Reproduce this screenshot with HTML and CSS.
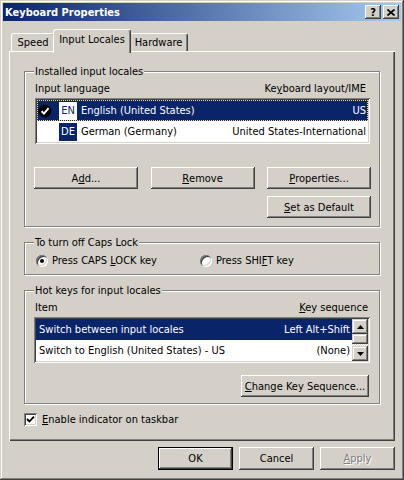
FILE: index.html
```html
<!DOCTYPE html>
<html>
<head>
<meta charset="utf-8">
<title>Keyboard Properties</title>
<link rel="stylesheet" href="styles.css">
</head>
<body>
<div class="window">
  <div class="titlebar">
    <span class="title">Keyboard Properties</span>
    <div class="tbtns">
      <span class="tbtn help">?</span>
      <span class="tbtn close"><svg width="8" height="7" viewBox="0 0 8 7"><path d="M0.5 0.5 L7.5 6.5 M7.5 0.5 L0.5 6.5" stroke="#000" stroke-width="1.7" fill="none"/></svg></span>
    </div>
  </div>
  <div class="content">
    <div class="tabs">
      <div class="tab t-speed">Speed</div>
      <div class="tab t-input sel">Input Locales</div>
      <div class="tab t-hw">Hardware</div>
    </div>
    <div class="panel">
      <fieldset class="group g1">
        <legend>Installed input locales</legend>
        <div class="colhead ch1"><span>Input language</span><span>Ke<u>y</u>board layout/IME</span></div>
        <div class="list l1">
          <div class="row sel focus">
            <span class="chk"><svg width="14" height="14" viewBox="0 0 14 14"><circle cx="7" cy="7" r="6.5" fill="#000"/><path d="M3.6 7.2 L6 9.6 L10.6 4.2" stroke="#fff" stroke-width="2" fill="none"/></svg></span>
            <span class="badge light">EN</span>
            <span class="name">English (United States)</span>
            <span class="val">US</span>
          </div>
          <div class="row">
            <span class="chk"></span>
            <span class="badge dark">DE</span>
            <span class="name">German (Germany)</span>
            <span class="val">United States-International</span>
          </div>
        </div>
        <div class="btnrow">
          <div class="btn w104">A<u>d</u>d...</div>
          <div class="btn w104"><u>R</u>emove</div>
          <div class="btn w104"><u>P</u>roperties...</div>
        </div>
        <div class="btnrow2">
          <div class="btn w104"><u>S</u>et as Default</div>
        </div>
      </fieldset>

      <fieldset class="group g2">
        <legend>To turn off Caps Lock</legend>
        <div class="radios">
          <div class="opt opt1"><span class="radio"><span class="dot"></span></span><span>Press CAPS <u>L</u>OCK key</span></div>
          <div class="opt"><span class="radio"></span><span>Press SHI<u>F</u>T key</span></div>
        </div>
      </fieldset>

      <fieldset class="group g3">
        <legend>Hot keys for input locales</legend>
        <div class="colhead ch3"><span>Item</span><span><u>K</u>ey sequence</span></div>
        <div class="list l3">
          <div class="rows">
            <div class="row2 sel"><span>Switch between input locales</span><span>Left Alt+Shift</span></div>
            <div class="row2"><span>Switch to English (United States) - US</span><span>(None)</span></div>
          </div>
          <div class="sbar">
            <div class="sbtn up"><svg width="7" height="4" viewBox="0 0 7 4"><polygon points="0,4 7,4 3.5,0" fill="#000"/></svg></div>
            <div class="thumb"></div>
            <div class="track"></div>
            <div class="sbtn down"><svg width="7" height="4" viewBox="0 0 7 4"><polygon points="0,0 7,0 3.5,4" fill="#000"/></svg></div>
          </div>
        </div>
        <div class="btnrow3">
          <div class="btn w128"><u>C</u>hange Key Sequence...</div>
        </div>
      </fieldset>

      <div class="checkrow">
        <span class="checkbox"><svg width="9" height="9" viewBox="0 0 9 9"><path d="M1 4 L3.4 6.4 L8 1.6" stroke="#000" stroke-width="1.8" fill="none"/></svg></span>
        <span><u>E</u>nable indicator on taskbar</span>
      </div>
    </div>
    <div class="footer">
      <div class="btn foot default">OK</div>
      <div class="btn foot">Cancel</div>
      <div class="btn foot disabled"><span><u>A</u>pply</span></div>
    </div>
  </div>
</div>
</body>
</html>
```

FILE: styles.css
```css
* { box-sizing: border-box; }
html, body { margin: 0; padding: 0; }
body {
  width: 404px;
  height: 480px;
  overflow: hidden;
  background: #D4D0C8;
  font-family: "DejaVu Sans Condensed", "DejaVu Sans", sans-serif;
  font-stretch: condensed;
  font-size: 11px;
  color: #000;
}
u { text-decoration: underline; text-underline-offset: 1px; }

.window {
  width: 404px;
  height: 480px;
  padding: 3px;
  background: #D4D0C8;
  box-shadow: inset -1px -1px 0 #404040, inset 1px 1px 0 #D4D0C8, inset -2px -2px 0 #808080, inset 2px 2px 0 #FFFFFF;
  display: flex;
  flex-direction: column;
}

.titlebar {
  height: 18px;
  display: flex;
  align-items: center;
  padding-left: 2px;
  background: linear-gradient(to right, #0A246A, #A6CAF0);
  color: #fff;
  font-weight: bold;
  line-height: 13px;
}
.tbtns { margin-left: auto; display: flex; gap: 2px; margin-right: 2px; }
.tbtn {
  width: 16px;
  height: 14px;
  background: #D4D0C8;
  box-shadow: inset -1px -1px 0 #404040, inset 1px 1px 0 #fff, inset -2px -2px 0 #808080, inset 2px 2px 0 #D4D0C8;
  display: flex;
  align-items: center;
  justify-content: center;
  color: #000;
}
.tbtn.help { font-weight: bold; font-size: 11px; line-height: 11px; padding-top: 1px; }

.content { padding: 0 6px; display: flex; flex-direction: column; }

.tabs {
  display: flex;
  align-items: flex-end;
  height: 22px;
  margin-top: 8px;
  padding-left: 2px;
}
.tab {
  height: 18px;
  padding-top: 2px;
  line-height: 13px;
  text-align: center;
  background: #D4D0C8;
  border-top: 1px solid #fff;
  border-left: 1px solid #fff;
  border-right: 1px solid #404040;
  border-radius: 3px 3px 0 0;
  box-shadow: inset -1px 0 0 #808080;
}
.t-speed { width: 44px; }
.t-input { width: 78px; }
.t-hw { width: 59px; }
.tab.sel {
  height: 24px;
  margin: 0 -2px -2px;
  padding-top: 3px;
  position: relative;
  z-index: 1;
}

.panel {
  padding: 14px 15px 15px 15px;
  box-shadow: inset 1px 1px 0 #fff, inset -1px -1px 0 #404040, inset -2px -2px 0 #808080;
}

.group {
  margin: 0;
  width: 356px;
  min-inline-size: 0;
  border: 1px solid #808080;
  box-shadow: 1px 1px 0 #fff, inset 1px 1px 0 #fff;
}
.group legend {
  padding: 0 1px;
  margin: 0;
  line-height: 13px;
  background: #D4D0C8;
}
.g1 { padding: 0 8px 8px 9px; }
.g2 { padding: 0 8px 7px 9px; margin-top: 9px; }
.g3 { padding: 0 8px 6px 9px; margin-top: 9px; }

.colhead {
  display: flex;
  justify-content: space-between;
  line-height: 13px;
  margin-top: 4px;
}
.ch1 { padding: 0 5px 0 1px; }
.ch3 { padding: 0 3px 0 1px; }

.list {
  margin-top: 3px;
  height: 46px;
  padding: 2px;
  background: #fff;
  box-shadow: inset 1px 1px 0 #808080, inset -1px -1px 0 #fff, inset 2px 2px 0 #404040, inset -2px -2px 0 #D4D0C8;
}
.l1 { margin-left: 1px; margin-right: 1px; }
.l3 { margin-right: 1px; display: flex; }

.row {
  height: 21px;
  display: flex;
  align-items: center;
  padding: 0 2px 0 1px;
}
.row.sel { background: #0A246A; color: #fff; }
.row.focus { outline: 1px dotted #F5DB95; outline-offset: -1px; }
.chk { width: 14px; height: 14px; display: flex; }
.badge {
  width: 18px;
  height: 18px;
  margin-left: 7px;
  display: flex;
  align-items: center;
  justify-content: center;
  line-height: 13px;
}
.badge.light { background: #fff; color: #0A246A; }
.badge.dark { background: #0A246A; color: #fff; }
.name { margin-left: 4px; }
.val { margin-left: auto; }

.rows { flex: 1; display: flex; flex-direction: column; }
.row2 {
  height: 21px;
  display: flex;
  align-items: center;
  justify-content: space-between;
  padding: 0 2px 0 3px;
}
.row2.sel { background: #0A246A; color: #fff; }

.sbar { width: 16px; display: flex; flex-direction: column; }
.sbtn, .thumb {
  background: #D4D0C8;
  box-shadow: inset -1px -1px 0 #404040, inset 1px 1px 0 #D4D0C8, inset -2px -2px 0 #808080, inset 2px 2px 0 #fff;
}
.sbtn { height: 15px; display: flex; align-items: center; justify-content: center; }
.thumb { height: 10px; }
.track {
  height: 2px;
  background: repeating-conic-gradient(#fff 0 25%, #D4D0C8 0 50%) 0 0 / 2px 2px;
}

.btn {
  height: 22px;
  display: flex;
  align-items: center;
  justify-content: center;
  line-height: 13px;
  background: #D4D0C8;
  box-shadow: inset -1px -1px 0 #404040, inset 1px 1px 0 #fff, inset -2px -2px 0 #808080, inset 2px 2px 0 #D4D0C8;
}
.w104 { width: 104px; }
.w128 { width: 128px; }
.btnrow { display: flex; justify-content: space-between; margin-top: 23px; }
.btnrow2 { display: flex; justify-content: flex-end; margin-top: 7px; }
.btnrow3 { display: flex; justify-content: flex-end; margin-top: 12px; padding-right: 2px; }

.radios { display: flex; margin-top: 5px; padding-left: 2px; line-height: 13px; }
.opt { display: flex; align-items: center; gap: 4px; }
.opt1 { width: 164px; }
.radio {
  width: 12px;
  height: 12px;
  border-radius: 50%;
  background: #fff;
  box-shadow: inset 1px 1px 0 #808080, inset -1px -1px 0 #fff, inset 2px 2px 0 #404040, inset -2px -2px 0 #D4D0C8;
  display: flex;
  align-items: center;
  justify-content: center;
}
.dot { width: 4px; height: 4px; border-radius: 50%; background: #000; }

.checkrow {
  margin-top: 9px;
  display: flex;
  align-items: center;
  gap: 5px;
  height: 13px;
  line-height: 13px;
}
.checkbox {
  width: 13px;
  height: 13px;
  background: #fff;
  box-shadow: inset 1px 1px 0 #808080, inset -1px -1px 0 #fff, inset 2px 2px 0 #404040, inset -2px -2px 0 #D4D0C8;
  display: flex;
  align-items: center;
  justify-content: center;
}

.footer { display: flex; justify-content: flex-end; gap: 6px; margin-top: 6px; }
.btn.foot { width: 75px; height: 23px; }
.btn.default {
  box-shadow: inset 0 0 0 1px #000, inset -2px -2px 0 #404040, inset 2px 2px 0 #fff, inset -3px -3px 0 #808080;
}
.btn.disabled { color: #808080; text-shadow: 1px 1px 0 #fff; }
```
